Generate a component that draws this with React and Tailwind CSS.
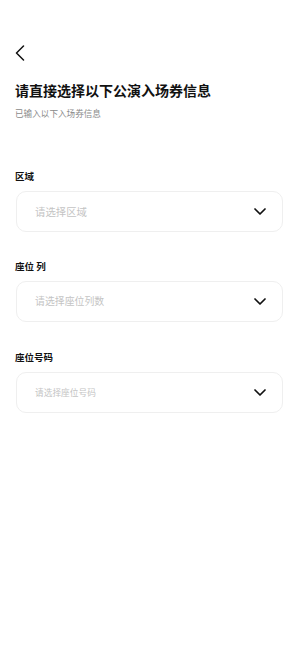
import React from "react";

function Chevron() {
  return (
    <svg width="12" height="7" viewBox="0 0 12 7" fill="none" className="shrink-0">
      <path d="M1 1 L6 6 L11 1" stroke="#111" strokeWidth="1.7" strokeLinecap="round" strokeLinejoin="round" />
    </svg>
  );
}

function Field({ label, placeholder, size, gap }) {
  return (
    <div className={gap}>
      <div className="h-[14px] leading-[14px] text-[9.5px] font-bold text-[#111] pl-[15px]">{label}</div>
      <div className="mt-[8px] ml-[16px] mr-[17px] h-[41px] rounded-[10px] border border-[#efefef] bg-white flex items-center justify-between pl-[18px] pr-[16px]">
        <span className={`${size} text-[#c4c4c4]`}>{placeholder}</span>
        <Chevron />
      </div>
    </div>
  );
}

export default function App() {
  return (
    <div
      className="w-[300px] h-[649px] bg-white overflow-hidden"
      style={{ fontFamily: '"Noto Sans CJK SC", "Noto Sans", sans-serif' }}
    >
      <div className="pt-[45px] pl-[15px]">
        <svg width="10" height="16" viewBox="0 0 10 16" fill="none">
          <path d="M8.5 1 L1.5 8 L8.5 15" stroke="#111" strokeWidth="1.5" strokeLinecap="round" strokeLinejoin="round" />
        </svg>
      </div>
      <div className="mt-[19px] pl-[15px] text-[14px] leading-[20px] font-bold text-[#111]">
        请直接选择以下公演入场券信息
      </div>
      <div className="mt-[7px] pl-[15px] text-[8.6px] leading-[12px] text-[#8a8a8a]">
        已输入以下入场券信息
      </div>
      <Field label="区域" placeholder="请选择区域" size="text-[10.4px]" gap="mt-[50px]" />
      <Field label="座位 列" placeholder="请选择座位列数" size="text-[9.9px]" gap="mt-[27px]" />
      <Field label="座位号码" placeholder="请选择座位号码" size="text-[8.7px]" gap="mt-[28px]" />
    </div>
  );
}
